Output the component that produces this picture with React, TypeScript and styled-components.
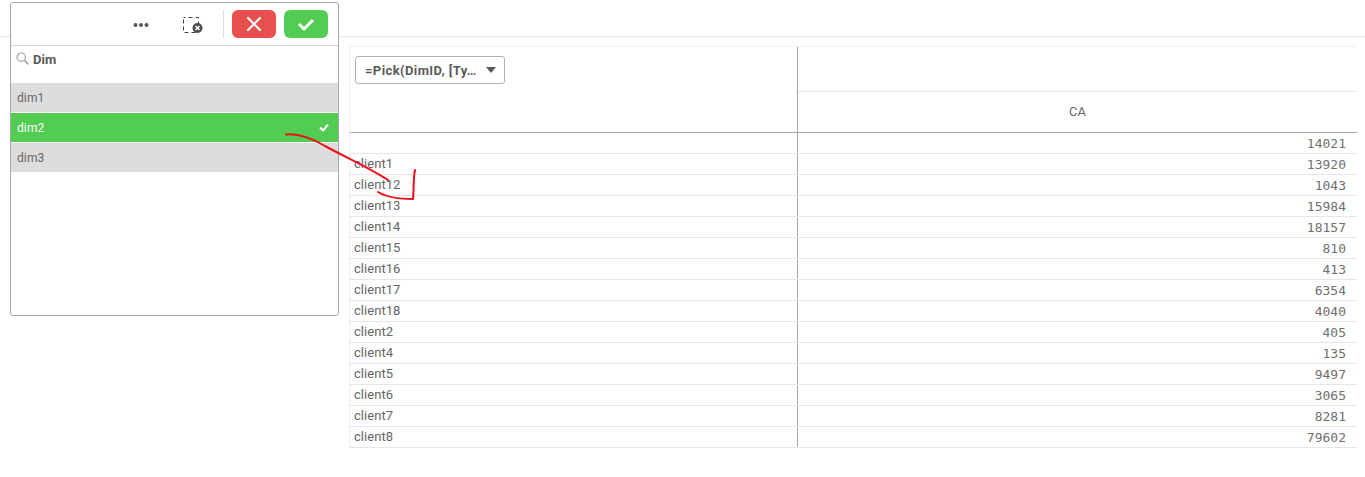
import React from "react";
import styled, { createGlobalStyle } from "styled-components";

const Global = createGlobalStyle`
  html, body { margin: 0; padding: 0; background: #fff; overflow: hidden; }
  body { font-family: Roboto, "Liberation Sans", sans-serif; color: #595959; }
`;

const Page = styled.div`
  position: relative;
  width: 1365px;
  height: 477px;
  overflow: hidden;
`;
const TopBar = styled.div`
  height: 36px;
  border-bottom: 1px solid #e6e6e6;
`;
const Content = styled.div`
  padding: 9px 8px 0 349px;
`;
const Table = styled.div`
  width: 1007px;
  border-left: 1px solid #eeeeee;
  border-top: 1px solid #f0f0f0;
`;
const Head = styled.div`
  display: grid;
  grid-template-columns: 448px 1fr;
  height: 85px;
  border-bottom: 1px solid #a6a6a6;
`;
const HeadLeft = styled.div`
  border-right: 1px solid #a6a6a6;
  padding: 9px 0 0 5px;
`;
const HeadRight = styled.div`
  display: flex;
  flex-direction: column;
`;
const HeadBlank = styled.div`
  height: 44px;
  border-bottom: 1px solid #e6e6e6;
`;
const HeadMeasure = styled.div`
  flex: 1;
  display: flex;
  align-items: center;
  justify-content: center;
  padding-bottom: 1px;
  font-size: 13px;
  color: #666666;
`;
const FieldButton = styled.div`
  box-sizing: border-box;
  width: 150px;
  height: 28px;
  border: 1px solid #b3b3b3;
  border-radius: 3px;
  display: flex;
  align-items: center;
  justify-content: space-between;
  padding: 0 8px 0 9px;
  font-size: 13px;
  font-weight: 700;
  letter-spacing: 0.4px;
  color: #595959;
  white-space: nowrap;
`;
const Caret = styled.span`
  width: 0;
  height: 0;
  border-left: 5px solid transparent;
  border-right: 5px solid transparent;
  border-top: 6px solid #595959;
`;
const Row = styled.div`
  display: grid;
  grid-template-columns: 448px 1fr;
  height: 20px;
  border-bottom: 1px solid #e6e6e6;
`;
const NameCell = styled.div`
  border-right: 1px solid #a6a6a6;
  padding: 0 0 0 4px;
  font-size: 13px;
  line-height: 19px;
  letter-spacing: 0.05px;
  color: #666666;
`;
const ValueCell = styled.div`
  text-align: right;
  padding: 1px 11px 0 0;
  font-family: "DejaVu Sans Mono", "Liberation Mono", monospace;
  font-size: 13px;
  line-height: 19px;
  color: #707070;
`;

const Popover = styled.div`
  position: absolute;
  left: 10px;
  top: 2px;
  box-sizing: border-box;
  width: 329px;
  height: 314px;
  background: #fff;
  border: 1px solid #a6a6a6;
  border-radius: 3px;
  display: flex;
  flex-direction: column;
`;
const Toolbar = styled.div`
  height: 35px;
  border-bottom: 1px solid #d4d4d4;
  display: flex;
  align-items: flex-start;
  padding-top: 7px;
`;
const ToolIcons = styled.div`
  display: flex;
  align-items: center;
  height: 28px;
  padding-left: 122px;
`;
const DotsIcon = styled.svg`
  margin-top: 2px;
`;
const ClearIcon = styled.svg`
  margin-left: 32px;
`;
const ToolSep = styled.div`
  width: 1px;
  height: 28px;
  background: #dedede;
  margin: 0 8px 0 20px;
`;
const ActionButton = styled.div<{ $bg: string }>`
  width: 44px;
  height: 28px;
  border-radius: 6px;
  background: ${(p) => p.$bg};
  margin-right: 8px;
  display: flex;
  align-items: center;
  justify-content: center;
`;
const Search = styled.div`
  height: 37px;
  display: flex;
  align-items: flex-start;
  padding: 6px 0 0 5px;
  box-sizing: border-box;
  gap: 4px;
  font-size: 13px;
  font-weight: 700;
  color: #595959;
  line-height: 13px;
`;
const SearchText = styled.span`
  padding-top: 1px;
`;
const List = styled.div`
  display: flex;
  flex-direction: column;
  gap: 1px;
`;
const Item = styled.div<{ $selected?: boolean }>`
  box-sizing: border-box;
  height: 29px;
  display: flex;
  align-items: center;
  justify-content: space-between;
  padding: 0 9px 0 6px;
  font-size: 12px;
  letter-spacing: 0.1px;
  background: ${(p) => (p.$selected ? "#52cc52" : "#dddddd")};
  color: ${(p) => (p.$selected ? "#ffffff" : "#666666")};
`;
const Ink = styled.svg`
  position: absolute;
  left: 0;
  top: 0;
  pointer-events: none;
`;

const rows: [string, string][] = [
  ["", "14021"],
  ["client1", "13920"],
  ["client12", "1043"],
  ["client13", "15984"],
  ["client14", "18157"],
  ["client15", "810"],
  ["client16", "413"],
  ["client17", "6354"],
  ["client18", "4040"],
  ["client2", "405"],
  ["client4", "135"],
  ["client5", "9497"],
  ["client6", "3065"],
  ["client7", "8281"],
  ["client8", "79602"],
];

export default function App() {
  return (
    <Page>
      <Global />
      <TopBar />
      <Content>
        <Table>
          <Head>
            <HeadLeft>
              <FieldButton>
                <span>=Pick(DimID, [Ty…</span>
                <Caret />
              </FieldButton>
            </HeadLeft>
            <HeadRight>
              <HeadBlank />
              <HeadMeasure>CA</HeadMeasure>
            </HeadRight>
          </Head>
          {rows.map(([n, v]) => (
            <Row key={n + v}>
              <NameCell>{n}</NameCell>
              <ValueCell>{v}</ValueCell>
            </Row>
          ))}
        </Table>
      </Content>
      <Popover>
        <Toolbar>
          <ToolIcons>
            <DotsIcon width="16" height="6" viewBox="0 0 16 6">
              <circle cx="2.5" cy="3" r="2" fill="#595959" />
              <circle cx="8" cy="3" r="2" fill="#595959" />
              <circle cx="13.5" cy="3" r="2" fill="#595959" />
            </DotsIcon>
            <ClearIcon width="22" height="18" viewBox="0 0 22 18">
              <rect x="2.5" y="2.5" width="15" height="15" fill="none" stroke="#404040" strokeWidth="1" strokeDasharray="4 3" strokeDashoffset="2" />
              <circle cx="16.5" cy="13" r="5" fill="#4d4d4d" />
              <path d="M14.5 11l4 4M18.5 11l-4 4" stroke="#fff" strokeWidth="1.5" />
            </ClearIcon>
            <ToolSep />
          </ToolIcons>
          <ActionButton $bg="#e84f4f">
            <svg width="16" height="16" viewBox="0 0 16 16">
              <path d="M2 2l12 12M14 2L2 14" stroke="#fff" strokeWidth="2.2" strokeLinecap="round" />
            </svg>
          </ActionButton>
          <ActionButton $bg="#52cc52">
            <svg width="18" height="14" viewBox="0 0 18 14">
              <path d="M2 7l5 5 9-9" fill="none" stroke="#fff" strokeWidth="3" strokeLinejoin="round" />
            </svg>
          </ActionButton>
        </Toolbar>
        <Search>
          <svg width="13" height="13" viewBox="0 0 13 13">
            <circle cx="5.2" cy="5.2" r="4.2" fill="none" stroke="#a6a6a6" strokeWidth="1.2" />
            <path d="M8.4 8.4l4 4" stroke="#a6a6a6" strokeWidth="1.6" />
          </svg>
          <SearchText>Dim</SearchText>
        </Search>
        <List>
          <Item>dim1</Item>
          <Item $selected>
            dim2
            <svg width="10" height="9" viewBox="0 0 10 9">
              <path d="M1 4.5l3 3 5-6" fill="none" stroke="#fff" strokeWidth="2" />
            </svg>
          </Item>
          <Item>dim3</Item>
        </List>
      </Popover>
      <Ink width="1365" height="477" viewBox="0 0 1365 477">
        <path d="M286 134.5C300 133 313 139 325 146C345 157 368 167 388 180" fill="none" stroke="#ee0f1c" strokeWidth="2" strokeLinecap="round" />
        <path d="M378 192C386 197 398 199 413 199C414 190 413 180 415 170" fill="none" stroke="#ee0f1c" strokeWidth="2" strokeLinecap="round" />
      </Ink>
    </Page>
  );
}
